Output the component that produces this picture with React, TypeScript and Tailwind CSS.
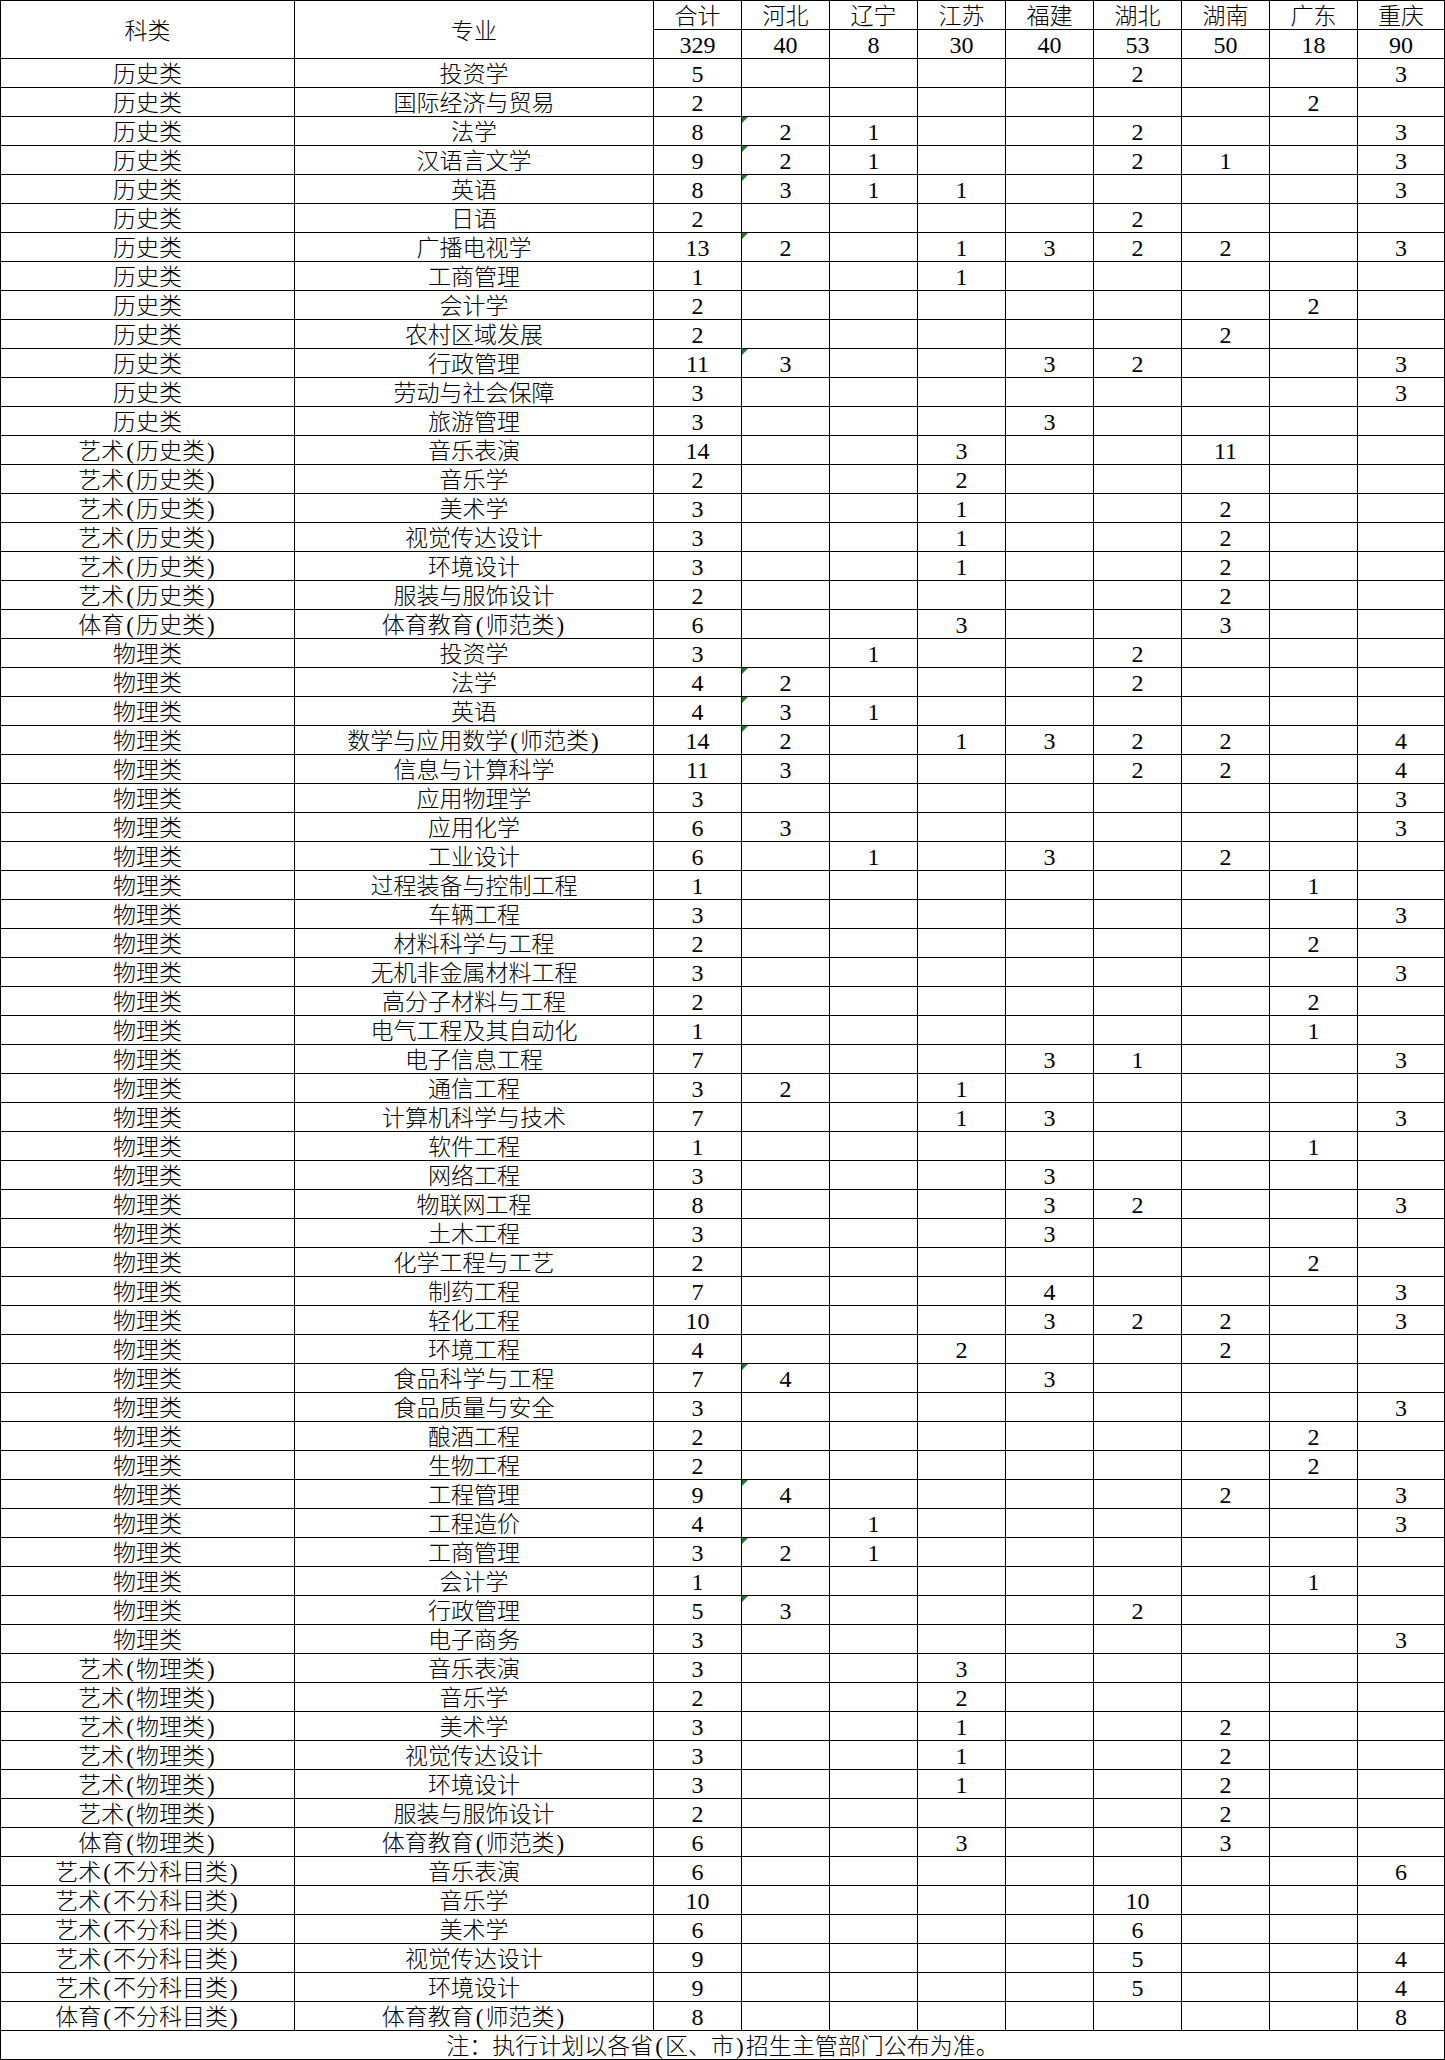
import React from 'react';

const PROVINCES = ['河北', '辽宁', '江苏', '福建', '湖北', '湖南', '广东', '重庆'] as const;
type Province = (typeof PROVINCES)[number];
type Row = [string, string, number, Partial<Record<Province, number>>, boolean?];

const HEADER_TOTALS: Record<Province | '合计', number> = {
  合计: 329, 河北: 40, 辽宁: 8, 江苏: 30, 福建: 40, 湖北: 53, 湖南: 50, 广东: 18, 重庆: 90,
};

const H = '历史类';
const W = '物理类';
const AH = '艺术(历史类)';
const TH = '体育(历史类)';
const AW = '艺术(物理类)';
const TW = '体育(物理类)';
const AN = '艺术(不分科目类)';
const TN = '体育(不分科目类)';

// last flag = Excel "number stored as text" marker on the 河北 cell
const ROWS: Row[] = [
  [H, '投资学', 5, { 湖北: 2, 重庆: 3 }],
  [H, '国际经济与贸易', 2, { 广东: 2 }],
  [H, '法学', 8, { 河北: 2, 辽宁: 1, 湖北: 2, 重庆: 3 }, true],
  [H, '汉语言文学', 9, { 河北: 2, 辽宁: 1, 湖北: 2, 湖南: 1, 重庆: 3 }, true],
  [H, '英语', 8, { 河北: 3, 辽宁: 1, 江苏: 1, 重庆: 3 }, true],
  [H, '日语', 2, { 湖北: 2 }],
  [H, '广播电视学', 13, { 河北: 2, 江苏: 1, 福建: 3, 湖北: 2, 湖南: 2, 重庆: 3 }, true],
  [H, '工商管理', 1, { 江苏: 1 }],
  [H, '会计学', 2, { 广东: 2 }],
  [H, '农村区域发展', 2, { 湖南: 2 }],
  [H, '行政管理', 11, { 河北: 3, 福建: 3, 湖北: 2, 重庆: 3 }, true],
  [H, '劳动与社会保障', 3, { 重庆: 3 }],
  [H, '旅游管理', 3, { 福建: 3 }],
  [AH, '音乐表演', 14, { 江苏: 3, 湖南: 11 }],
  [AH, '音乐学', 2, { 江苏: 2 }],
  [AH, '美术学', 3, { 江苏: 1, 湖南: 2 }],
  [AH, '视觉传达设计', 3, { 江苏: 1, 湖南: 2 }],
  [AH, '环境设计', 3, { 江苏: 1, 湖南: 2 }],
  [AH, '服装与服饰设计', 2, { 湖南: 2 }],
  [TH, '体育教育(师范类)', 6, { 江苏: 3, 湖南: 3 }],
  [W, '投资学', 3, { 辽宁: 1, 湖北: 2 }],
  [W, '法学', 4, { 河北: 2, 湖北: 2 }, true],
  [W, '英语', 4, { 河北: 3, 辽宁: 1 }, true],
  [W, '数学与应用数学(师范类)', 14, { 河北: 2, 江苏: 1, 福建: 3, 湖北: 2, 湖南: 2, 重庆: 4 }, true],
  [W, '信息与计算科学', 11, { 河北: 3, 湖北: 2, 湖南: 2, 重庆: 4 }],
  [W, '应用物理学', 3, { 重庆: 3 }],
  [W, '应用化学', 6, { 河北: 3, 重庆: 3 }],
  [W, '工业设计', 6, { 辽宁: 1, 福建: 3, 湖南: 2 }],
  [W, '过程装备与控制工程', 1, { 广东: 1 }],
  [W, '车辆工程', 3, { 重庆: 3 }],
  [W, '材料科学与工程', 2, { 广东: 2 }],
  [W, '无机非金属材料工程', 3, { 重庆: 3 }],
  [W, '高分子材料与工程', 2, { 广东: 2 }],
  [W, '电气工程及其自动化', 1, { 广东: 1 }],
  [W, '电子信息工程', 7, { 福建: 3, 湖北: 1, 重庆: 3 }],
  [W, '通信工程', 3, { 河北: 2, 江苏: 1 }],
  [W, '计算机科学与技术', 7, { 江苏: 1, 福建: 3, 重庆: 3 }],
  [W, '软件工程', 1, { 广东: 1 }],
  [W, '网络工程', 3, { 福建: 3 }],
  [W, '物联网工程', 8, { 福建: 3, 湖北: 2, 重庆: 3 }],
  [W, '土木工程', 3, { 福建: 3 }],
  [W, '化学工程与工艺', 2, { 广东: 2 }],
  [W, '制药工程', 7, { 福建: 4, 重庆: 3 }],
  [W, '轻化工程', 10, { 福建: 3, 湖北: 2, 湖南: 2, 重庆: 3 }],
  [W, '环境工程', 4, { 江苏: 2, 湖南: 2 }],
  [W, '食品科学与工程', 7, { 河北: 4, 福建: 3 }, true],
  [W, '食品质量与安全', 3, { 重庆: 3 }],
  [W, '酿酒工程', 2, { 广东: 2 }],
  [W, '生物工程', 2, { 广东: 2 }],
  [W, '工程管理', 9, { 河北: 4, 湖南: 2, 重庆: 3 }, true],
  [W, '工程造价', 4, { 辽宁: 1, 重庆: 3 }],
  [W, '工商管理', 3, { 河北: 2, 辽宁: 1 }, true],
  [W, '会计学', 1, { 广东: 1 }],
  [W, '行政管理', 5, { 河北: 3, 湖北: 2 }, true],
  [W, '电子商务', 3, { 重庆: 3 }],
  [AW, '音乐表演', 3, { 江苏: 3 }],
  [AW, '音乐学', 2, { 江苏: 2 }],
  [AW, '美术学', 3, { 江苏: 1, 湖南: 2 }],
  [AW, '视觉传达设计', 3, { 江苏: 1, 湖南: 2 }],
  [AW, '环境设计', 3, { 江苏: 1, 湖南: 2 }],
  [AW, '服装与服饰设计', 2, { 湖南: 2 }],
  [TW, '体育教育(师范类)', 6, { 江苏: 3, 湖南: 3 }],
  [AN, '音乐表演', 6, { 重庆: 6 }],
  [AN, '音乐学', 10, { 湖北: 10 }],
  [AN, '美术学', 6, { 湖北: 6 }],
  [AN, '视觉传达设计', 9, { 湖北: 5, 重庆: 4 }],
  [AN, '环境设计', 9, { 湖北: 5, 重庆: 4 }],
  [TN, '体育教育(师范类)', 8, { 重庆: 8 }],
];

const cell = 'relative flex items-center justify-center border-l border-t border-black h-[29px] leading-none';
const textCell = `${cell} text-[23px] pt-[3px]`;
const numCell = `${cell} text-[24px] pt-[2px]`;

// SimSun-style half-width parens sit in a wider box than Liberation's
function Label({ text }: { text: string }) {
  const parts = text.split(/([()])/);
  return (
    <>
      {parts.map((part, i) =>
        part === '(' || part === ')' ? (
          <span key={i} className="mx-[2px]">{part}</span>
        ) : (
          <React.Fragment key={i}>{part}</React.Fragment>
        ),
      )}
    </>
  );
}

function Marker() {
  return (
    <span className="absolute left-0 top-0 h-0 w-0 border-t-[6px] border-r-[6px] border-t-[#1e7b34] border-r-transparent" />
  );
}

export default function App() {
  return (
    <div
      className="w-[1445px] bg-white text-black"
      style={{ fontFamily: '"Liberation Serif", "Noto Sans CJK SC", serif' }}
    >
      <div className="grid grid-cols-[294px_359px_repeat(8,88px)_87px] border-r border-b border-black font-light">
        <div className={`${textCell} row-span-2 h-[58px]`}>科类</div>
        <div className={`${textCell} row-span-2 h-[58px]`}>专业</div>
        {(['合计', ...PROVINCES] as const).map((name) => (
          <div key={name} className={textCell}>{name}</div>
        ))}
        {(['合计', ...PROVINCES] as const).map((name) => (
          <div key={`t-${name}`} className={numCell}>{HEADER_TOTALS[name]}</div>
        ))}

        {ROWS.map(([cat, major, total, counts, marked], i) => (
          <React.Fragment key={i}>
            <div className={textCell}><Label text={cat} /></div>
            <div className={textCell}><Label text={major} /></div>
            <div className={numCell}>{total}</div>
            {PROVINCES.map((p) => (
              <div key={p} className={numCell}>
                {p === '河北' && marked && <Marker />}
                {counts[p] ?? ''}
              </div>
            ))}
          </React.Fragment>
        ))}

        <div className={`${textCell} col-span-11`}>
          <Label text="注：执行计划以各省(区、市)招生主管部门公布为准。" />
        </div>
      </div>
    </div>
  );
}
